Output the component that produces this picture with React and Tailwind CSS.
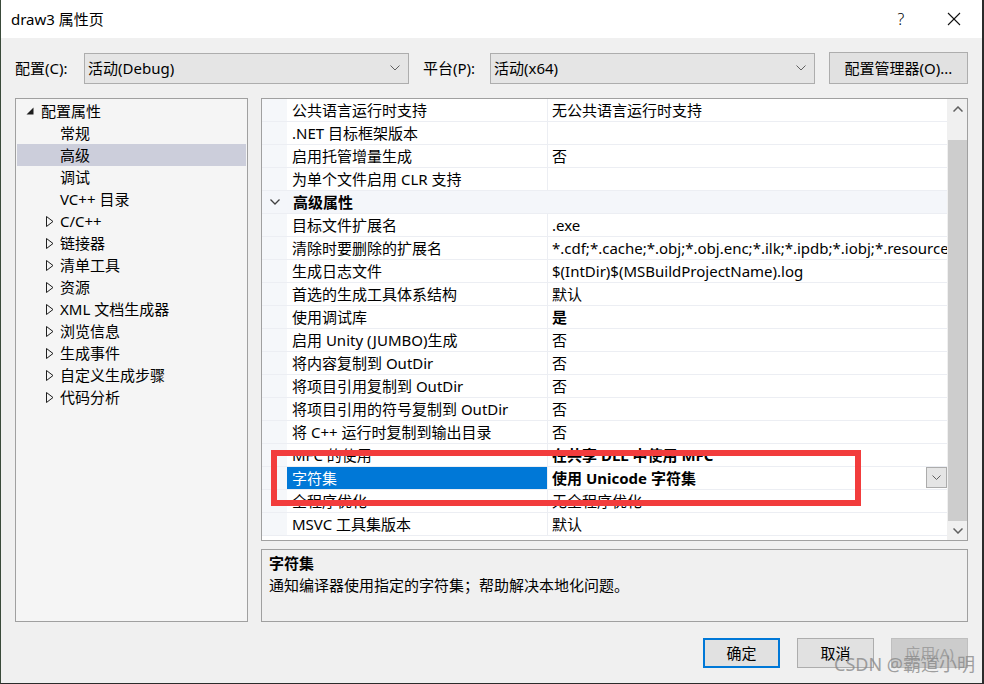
import React from "react";

const FONT = "font-['Noto_Sans','Noto_Sans_CJK_SC',sans-serif]";

function Chevron({ className = "" }) {
  return (
    <svg width="10" height="6" viewBox="0 0 10 6" className={className}>
      <polyline points="0.5,0.5 5,5 9.5,0.5" fill="none" stroke="#606060" strokeWidth="1" />
    </svg>
  );
}

function Combo({ text, width }) {
  return (
    <div
      className="h-[31px] flex items-center justify-between bg-[#e5e5e5] border border-[#adadad] pl-[3px] pr-[8px] text-[15px] text-black"
      style={{ width }}
    >
      <span>{text}</span>
      <Chevron />
    </div>
  );
}

const tree = [
  { t: "配置属性", lvl: 0, exp: true },
  { t: "常规", lvl: 1 },
  { t: "高级", lvl: 1, sel: true },
  { t: "调试", lvl: 1 },
  { t: "VC++ 目录", lvl: 1 },
  { t: "C/C++", lvl: 1, col: true },
  { t: "链接器", lvl: 1, col: true },
  { t: "清单工具", lvl: 1, col: true },
  { t: "资源", lvl: 1, col: true },
  { t: "XML 文档生成器", lvl: 1, col: true },
  { t: "浏览信息", lvl: 1, col: true },
  { t: "生成事件", lvl: 1, col: true },
  { t: "自定义生成步骤", lvl: 1, col: true },
  { t: "代码分析", lvl: 1, col: true },
];

const rows = [
  { n: "公共语言运行时支持", v: "无公共语言运行时支持" },
  { n: ".NET 目标框架版本", v: "" },
  { n: "启用托管增量生成", v: "否" },
  { n: "为单个文件启用 CLR 支持", v: "" },
  { cat: "高级属性" },
  { n: "目标文件扩展名", v: ".exe" },
  { n: "清除时要删除的扩展名", v: "*.cdf;*.cache;*.obj;*.obj.enc;*.ilk;*.ipdb;*.iobj;*.resources;*.tlb;*.tli;*.tlh;*.tmp;*.rsp" },
  { n: "生成日志文件", v: "$(IntDir)$(MSBuildProjectName).log" },
  { n: "首选的生成工具体系结构", v: "默认" },
  { n: "使用调试库", v: "是", b: true },
  { n: "启用 Unity (JUMBO)生成", v: "否" },
  { n: "将内容复制到 OutDir", v: "否" },
  { n: "将项目引用复制到 OutDir", v: "否" },
  { n: "将项目引用的符号复制到 OutDir", v: "否" },
  { n: "将 C++ 运行时复制到输出目录", v: "否" },
  { n: "MFC 的使用", v: "在共享 DLL 中使用 MFC", b: true },
  { n: "字符集", v: "使用 Unicode 字符集", b: true, sel: true },
  { n: "全程序优化", v: "无全程序优化" },
  { n: "MSVC 工具集版本", v: "默认" },
];

export default function App() {
  return (
    <div className={`${FONT} w-[984px] h-[684px] bg-[#f0f0f0] border-l border-l-[#3a4a3a] border-r-2 border-r-[#2b2b2b] border-b border-b-[#2b2b2b] flex flex-col relative overflow-hidden text-black`}>
      {/* Title bar */}
      <div className="h-[38px] bg-white flex items-center justify-between pl-[10px] shrink-0">
        <span className="text-[15px]">draw3 属性页</span>
        <div className="flex items-center h-full">
          <span className="text-[16px] font-light w-[46px] text-center mr-[7px]">?</span>
          <div className="w-[46px] h-full flex items-center justify-center mr-[5px]">
            <svg width="14" height="14" viewBox="0 0 14 14">
              <line x1="1" y1="1" x2="13" y2="13" stroke="#111" strokeWidth="1.1" />
              <line x1="13" y1="1" x2="1" y2="13" stroke="#111" strokeWidth="1.1" />
            </svg>
          </div>
        </div>
      </div>

      {/* Config row */}
      <div className="flex items-center mt-[14px] h-[32px] pl-[14px] text-[15px]">
        <span className="w-[69px]">配置(C):</span>
        <Combo text="活动(Debug)" width={325} />
        <span className="ml-[14px] w-[67px]">平台(P):</span>
        <Combo text="活动(x64)" width={325} />
        <div className="ml-[14px] w-[139px] h-[32px] bg-[#e1e1e1] border border-[#adadad] flex items-center justify-center">
          配置管理器(O)...
        </div>
      </div>

      {/* Main area */}
      <div className="flex mt-[14px] pl-[14px] gap-[13px] h-[524px]">
        {/* Tree */}
        <div className="w-[233px] h-full bg-[#f5f5f5] border border-[#a0a0a0] pt-[1px] pl-[1px] pr-[1px]">
          {tree.map((it, i) => (
            <div
              key={i}
              className={`h-[22px] flex items-center text-[15px] relative ${it.sel ? "bg-[#cccedb]" : ""}`}
            >
              {it.lvl === 0 ? (
                <>
                  <svg width="8" height="8" viewBox="0 0 8 8" className="absolute left-[9px] top-[7px]">
                    <polygon points="7.5,0.5 7.5,7.5 0.5,7.5" fill="#1e1e1e" />
                  </svg>
                  <span className="ml-[24px]">{it.t}</span>
                </>
              ) : (
                <>
                  {it.col && (
                    <svg width="8" height="11" viewBox="0 0 8 11" className="absolute left-[29px] top-[6px]">
                      <polygon points="0.5,0.5 7,5.5 0.5,10.5" fill="none" stroke="#1e1e1e" strokeWidth="1" />
                    </svg>
                  )}
                  <span className="ml-[43px]">{it.t}</span>
                </>
              )}
            </div>
          ))}
        </div>

        {/* Right column */}
        <div className="w-[707px] h-full flex flex-col gap-[8px]">
          {/* Grid */}
          <div className="h-[443px] bg-white border border-[#a0a0a0] flex overflow-hidden">
            <div className="flex-1 flex flex-col overflow-hidden">
              {rows.map((r, i) =>
                r.cat ? (
                  <div key={i} className="h-[23px] shrink-0 flex items-center bg-[#f4f6fa] border-b border-[#eceef3]">
                    <div className="w-[25px] flex justify-center">
                      <svg width="10" height="6" viewBox="0 0 10 6">
                        <polyline points="0.5,0.5 5,5 9.5,0.5" fill="none" stroke="#404040" strokeWidth="1.3" />
                      </svg>
                    </div>
                    <span className="pl-[6px] text-[15px] font-bold">{r.cat}</span>
                  </div>
                ) : (
                  <div key={i} className="h-[23px] shrink-0 flex items-stretch border-b border-[#eceef3] text-[15px]">
                    <div className="w-[25px] bg-[#f5f7fa] shrink-0" />
                    <div
                      className={`w-[261px] shrink-0 flex items-center pl-[5px] border-r border-[#eceef3] whitespace-nowrap overflow-hidden ${r.sel ? "bg-[#0078d7] text-white" : ""}`}
                    >
                      {r.n}
                    </div>
                    <div className="flex-1 flex items-center pl-[4px] whitespace-nowrap overflow-hidden relative">
                      <span className={r.b ? "font-bold" : ""}>{r.v}</span>
                      {r.sel && (
                        <div className="absolute right-[0px] top-[0px] w-[21px] h-[21px] bg-[#e5e5e5] border border-[#acacac] flex items-center justify-center">
                          <svg width="9" height="5" viewBox="0 0 9 5">
                            <polyline points="0.5,0.5 4.5,4.5 8.5,0.5" fill="none" stroke="#606060" strokeWidth="1" />
                          </svg>
                        </div>
                      )}
                    </div>
                  </div>
                )
              )}
            </div>
            {/* Scrollbar */}
            <div className="w-[20px] shrink-0 bg-[#f0f0f0] flex flex-col items-center border-l border-[#f0f0f0]">
              <div className="h-[20px] w-full flex items-center justify-center">
                <svg width="10" height="6" viewBox="0 0 10 6">
                  <polyline points="0.5,5.5 5,1 9.5,5.5" fill="none" stroke="#606060" strokeWidth="1.5" />
                </svg>
              </div>
              <div className="mt-[21px] w-[19px] h-[381px] bg-[#cdcdcd]" />
              <div className="flex-1 w-full flex items-center justify-center">
                <svg width="10" height="6" viewBox="0 0 10 6">
                  <polyline points="0.5,0.5 5,5 9.5,0.5" fill="none" stroke="#606060" strokeWidth="1.5" />
                </svg>
              </div>
            </div>
          </div>

          {/* Description */}
          <div className="flex-1 border border-[#a0a0a0] bg-[#f0f0f0] pl-[7px] pt-[2px] text-[15px]">
            <div className="font-bold h-[22px] leading-[22px]">字符集</div>
            <div className="h-[23px] leading-[23px]">通知编译器使用指定的字符集；帮助解决本地化问题。</div>
          </div>
        </div>
      </div>

      {/* Buttons */}
      <div className="flex justify-end mt-[16px] pr-[14px] gap-[17px] text-[15px]">
        <div className="w-[77px] h-[30px] bg-[#e1e1e1] border-2 border-[#0078d7] flex items-center justify-center">确定</div>
        <div className="w-[77px] h-[30px] bg-[#e1e1e1] border border-[#adadad] flex items-center justify-center">取消</div>
        <div className="w-[77px] h-[30px] bg-[#cccccc] border border-[#bfbfbf] flex items-center justify-center text-[#a0a0a0]">应用(A)</div>
      </div>

      {/* Red annotation box */}
      <div className="absolute left-[270px] top-[450px] w-[590px] h-[56px] border-[6px] border-[#f23c3c]" />

      {/* Watermark */}
      <div className="absolute left-[833px] top-[651px] text-[18px] text-[#8a8a8a] opacity-80 whitespace-nowrap">
        CSDN @霸道小明
      </div>
    </div>
  );
}
